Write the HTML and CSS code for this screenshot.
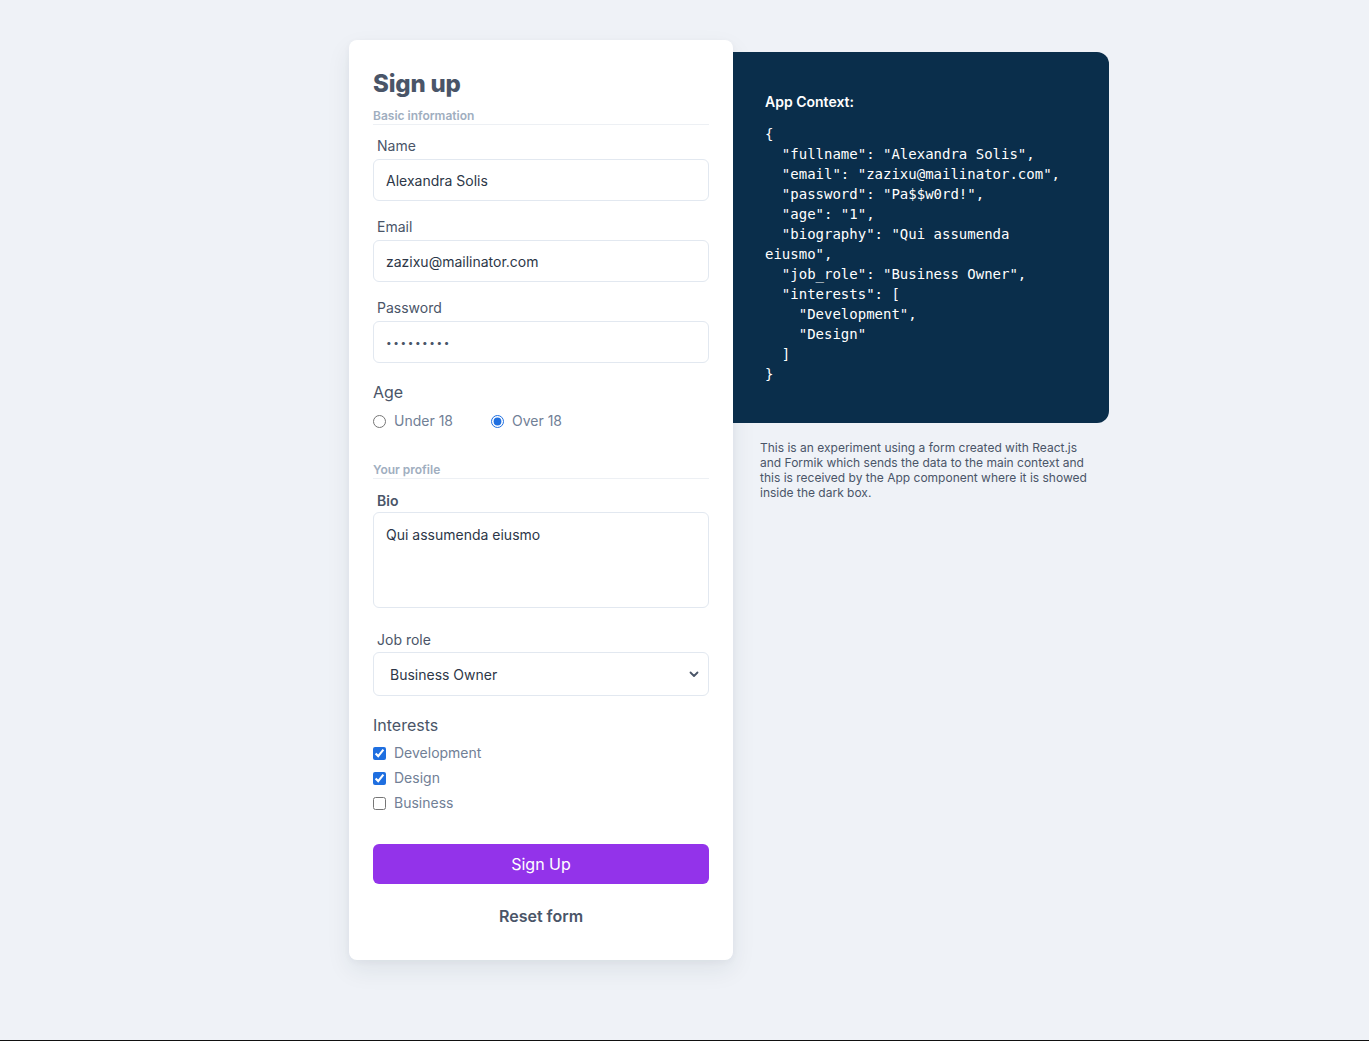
FILE: index.html
```html
<!DOCTYPE html>
<html lang="en">
<head>
<meta charset="utf-8">
<title>Sign up</title>
<link rel="stylesheet" href="styles.css">
</head>
<body>
<main class="page">
  <form class="card">
    <h1 class="title">Sign up</h1>
    <div class="section-title">Basic information</div>

    <div class="field">
      <label class="label" for="name">Name</label>
      <input class="input" id="name" type="text" value="Alexandra Solis">
    </div>
    <div class="field">
      <label class="label" for="email">Email</label>
      <input class="input" id="email" type="email" value="zazixu@mailinator.com">
    </div>
    <div class="field">
      <label class="label" for="password">Password</label>
      <input class="input input-password" id="password" type="password" value="Pa$$w0rd!">
    </div>

    <div class="group-title">Age</div>
    <div class="radios">
      <label class="option radio-option"><input type="radio" name="age" value="0"> Under 18</label>
      <label class="option"><input type="radio" name="age" value="1" checked> Over 18</label>
    </div>

    <div class="section-title section-two">Your profile</div>

    <div class="field field-bio">
      <label class="label label-bold" for="bio">Bio</label>
      <textarea class="input textarea" id="bio">Qui assumenda eiusmo</textarea>
    </div>

    <div class="field field-job">
      <label class="label label-job" for="job">Job role</label>
      <div class="select-wrap">
        <select class="input select" id="job">
          <option>Business Owner</option>
        </select>
        <svg class="chevron" width="10" height="7" viewBox="0 0 10 7"><path d="M1.5 1.5 L5 5 L8.5 1.5" fill="none" stroke="#4a5568" stroke-width="1.8" stroke-linecap="round" stroke-linejoin="round"/></svg>
      </div>
    </div>

    <div class="group-title">Interests</div>
    <div class="checks">
      <label class="option"><input type="checkbox" checked> Development</label>
      <label class="option"><input type="checkbox" checked> Design</label>
      <label class="option"><input type="checkbox"> Business</label>
    </div>

    <button class="btn-primary" type="button">Sign Up</button>
    <button class="btn-reset" type="button">Reset form</button>
  </form>

  <aside class="side">
    <div class="context">
      <div class="context-title">App Context:</div>
<pre class="code">{
  "fullname": "Alexandra Solis",
  "email": "zazixu@mailinator.com",
  "password": "Pa$$w0rd!",
  "age": "1",
  "biography": "Qui assumenda eiusmo",
  "job_role": "Business Owner",
  "interests": [
    "Development",
    "Design"
  ]
}</pre>
    </div>
    <p class="note">This is an experiment using a form created with React.js and Formik which sends the data to the main context and this is received by the App component where it is showed inside the dark box.</p>
  </aside>
</main>
</body>
</html>
```

FILE: styles.css
```css
* { box-sizing: border-box; }

html, body { margin: 0; padding: 0; }

body {
  background: #eff2f7;
  font-family: Inter, "Noto Sans", "Liberation Sans", sans-serif;
  color: #4a5568;
  height: 1041px;
  border-bottom: 1px solid #111;
}

.page {
  display: flex;
  align-items: flex-start;
  padding: 40px 0 0 349px;
}

.card {
  width: 384px;
  background: #fff;
  border-radius: 8px;
  padding: 28px 24px 32px 24px;
  box-shadow: 0 10px 25px rgba(30, 45, 70, 0.08), 0 2px 6px rgba(30, 45, 70, 0.04);
  display: flex;
  flex-direction: column;
}

.title {
  margin: 0;
  font-size: 24px;
  line-height: 32px;
  font-weight: 800;
  color: #4a5568;
  letter-spacing: -0.2px;
}

.section-title {
  margin-top: 8px;
  font-size: 12px;
  line-height: 16px;
  font-weight: 600;
  color: #a0aec0;
  border-bottom: 1px solid #edf0f4;
}

.section-two { margin-top: 31px; }

.field {
  display: flex;
  flex-direction: column;
  margin-top: 11px;
}

.field + .field { margin-top: 16px; }

.field.field-bio { margin-top: 12px; }

.label {
  font-size: 14px;
  line-height: 20px;
  padding-left: 4px;
  color: #4a5568;
  margin-bottom: 3px;
}

.label-bold {
  font-weight: 600;
  margin-bottom: 1px;
}

.label-job { margin-bottom: 2px; }

.input {
  width: 100%;
  height: 42px;
  border: 1px solid #e2e8f0;
  border-radius: 6px;
  padding: 0 12px;
  font-family: inherit;
  font-size: 14px;
  color: #2d3748;
  background: #fff;
  outline: none;
}

.input-password {
  letter-spacing: 1.6px;
  font-size: 10px;
  color: #4a5568;
}

.textarea {
  height: 96px;
  padding: 12px 12px;
  line-height: 20px;
  resize: none;
  display: block;
}

.field.field-job { margin-top: 22px; }

.select-wrap { position: relative; }

.select {
  height: 44px;
  padding: 0 16px;
  appearance: none;
  -webkit-appearance: none;
}

.chevron {
  position: absolute;
  right: 10px;
  top: 19px;
}

.group-title {
  margin-top: 17px;
  font-size: 16px;
  line-height: 24px;
  color: #4a5568;
}

.radios {
  display: flex;
  margin-top: 7px;
}

.option {
  display: flex;
  align-items: center;
  font-size: 14px;
  line-height: 20px;
  color: #718096;
}

.option input {
  margin: 0 8px 0 0;
  width: 13px;
  height: 13px;
  accent-color: #1f6fe0;
}

.radio-option { margin-right: 38px; }

.checks {
  display: flex;
  flex-direction: column;
  gap: 5px;
  margin-top: 6px;
}

.btn-primary {
  margin-top: 31px;
  height: 40px;
  border: none;
  border-radius: 6px;
  background: #9333ea;
  color: #fff;
  font-family: inherit;
  font-size: 16px;
  cursor: pointer;
}

.btn-reset {
  margin-top: 20px;
  height: 24px;
  border: none;
  background: none;
  font-family: inherit;
  font-size: 16px;
  font-weight: 600;
  color: #4a5568;
  padding: 0;
}

.side {
  width: 376px;
  margin-top: 12px;
}

.context {
  background: #0a2e4b;
  border-radius: 0 12px 12px 0;
  padding: 40px 32px 39px 32px;
  color: #fff;
}

.context-title {
  font-size: 14px;
  line-height: 20px;
  font-weight: 600;
}

.code {
  margin: 12px 0 0 0;
  font-family: "DejaVu Sans Mono", "Liberation Mono", monospace;
  font-size: 14px;
  line-height: 20px;
  white-space: pre-wrap;
  color: #fff;
}

.note {
  margin: 17px 0 0 0;
  padding: 0 12px 0 27px;
  font-size: 12px;
  line-height: 15px;
  color: #4a5568;
}
```
